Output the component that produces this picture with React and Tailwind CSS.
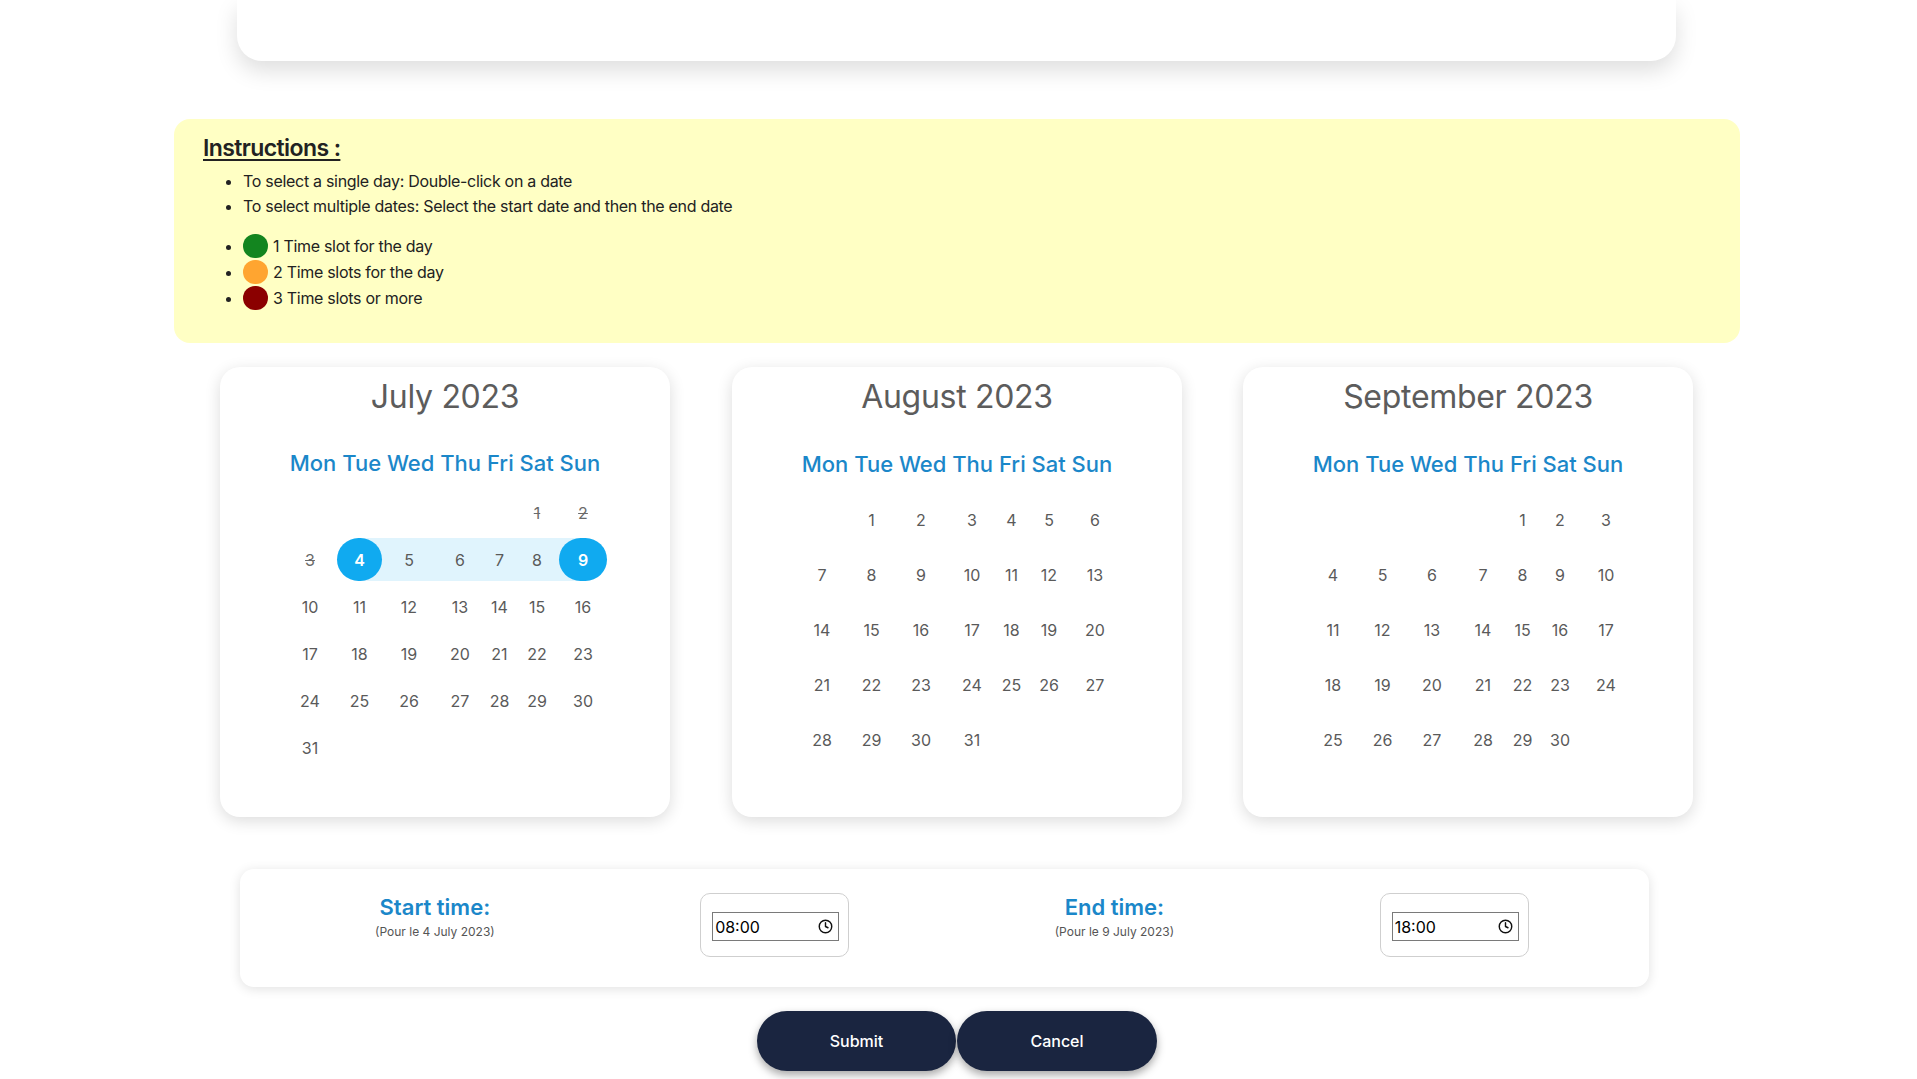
import React from "react";
import { Clock } from "lucide-react";

const months = [
  {
    title: "July 2023",
    compact: true,
    rows: [
      [null, null, null, null, null, 1, 2],
      [3, 4, 5, 6, 7, 8, 9],
      [10, 11, 12, 13, 14, 15, 16],
      [17, 18, 19, 20, 21, 22, 23],
      [24, 25, 26, 27, 28, 29, 30],
      [31, null, null, null, null, null, null],
    ],
    past: [1, 2, 3],
    start: 4,
    end: 9,
  },
  {
    title: "August 2023",
    compact: false,
    rows: [
      [null, 1, 2, 3, 4, 5, 6],
      [7, 8, 9, 10, 11, 12, 13],
      [14, 15, 16, 17, 18, 19, 20],
      [21, 22, 23, 24, 25, 26, 27],
      [28, 29, 30, 31, null, null, null],
    ],
    past: [],
  },
  {
    title: "September 2023",
    compact: false,
    rows: [
      [null, null, null, null, 1, 2, 3],
      [4, 5, 6, 7, 8, 9, 10],
      [11, 12, 13, 14, 15, 16, 17],
      [18, 19, 20, 21, 22, 23, 24],
      [25, 26, 27, 28, 29, 30, null],
    ],
    past: [],
  },
];

function DayCell({ d, m }) {
  if (d === null) return <div />;
  const isStart = m.start === d;
  const isEnd = m.end === d;
  const isMid = m.start && d > m.start && d < m.end;
  if (isStart || isEnd) {
    return (
      <div className="relative flex h-full items-center">
        <div
          className={
            isStart
              ? "absolute left-1/2 right-0 h-[43px] bg-[#e0f4fd]"
              : "absolute left-0 right-1/2 h-[43px] bg-[#e0f4fd]"
          }
        />
        <div className="relative flex h-[43px] w-full items-center justify-center rounded-full bg-[#10aaf0] text-[16px] font-semibold text-white">
          {d}
        </div>
      </div>
    );
  }
  if (isMid) {
    return (
      <div className="flex h-full items-center">
        <div className="flex h-[43px] w-full items-center justify-center bg-[#e0f4fd] text-[16px] text-[#5a5a5a]">
          {d}
        </div>
      </div>
    );
  }
  const past = m.past.includes(d);
  return (
    <div
      className={
        past
          ? "flex h-full items-center justify-center text-[16px] text-[#6a6a6a] line-through"
          : "flex h-full items-center justify-center text-[16px] text-[#5a5a5a]"
      }
    >
      {d}
    </div>
  );
}

function MonthCard({ m }) {
  return (
    <div className="h-[450px] w-[450px] shrink-0 rounded-[20px] bg-white pt-[11px] shadow-[0_4px_16px_rgba(0,0,0,0.14)]">
      <h2 className="h-[38px] text-center text-[32px] font-normal leading-[38px] tracking-[-0.3px] text-[#5c5c5c]">
        {m.title}
      </h2>
      <div
        className={
          m.compact
            ? "mt-[22px] h-[51px] text-center text-[22px] font-medium leading-[51px] text-[#1b87c9]"
            : "mt-[20px] h-[56px] text-center text-[22px] font-medium leading-[56px] text-[#1b87c9]"
        }
      >
        Mon Tue Wed Thu Fri Sat Sun
      </div>
      <div className="mx-auto w-[324px]">
        {m.rows.map((row, i) => (
          <div
            key={i}
            className={
              m.compact
                ? "grid h-[47px] grid-cols-[54px_45px_54px_48px_31px_44px_48px]"
                : "grid h-[55px] grid-cols-[54px_45px_54px_48px_31px_44px_48px]"
            }
          >
            {row.map((d, j) => (
              <DayCell key={j} d={d} m={m} />
            ))}
          </div>
        ))}
      </div>
    </div>
  );
}

function TimeLabel({ title, sub }) {
  return (
    <div className="flex flex-col items-center pt-[25px]">
      <div className="text-[22px] font-semibold leading-[26px] text-[#1b87c9]">{title}</div>
      <div className="mt-[4px] text-[12px] leading-[16px] text-[#555]">{sub}</div>
    </div>
  );
}

function TimeBox({ value }) {
  return (
    <div className="flex justify-center pt-[24px]">
      <div className="h-[64px] w-[149px] rounded-[10px] border border-[#cfcfcf] bg-white px-[11px] py-[18px]">
        <div className="flex h-[29px] w-[127px] items-center justify-between border border-[#7a7a7a] pl-[2px] pr-[5px] text-[16px] text-black">
          <span>{value}</span>
          <Clock size={15} strokeWidth={2.3} color="#111" />
        </div>
      </div>
    </div>
  );
}

function Legend({ color, children }) {
  return (
    <li>
      <span className="inline-flex h-[26px] items-center align-top">
        <span className={`mr-[5px] inline-block h-[24px] w-[25px] rounded-full ${color}`} />
        <span>{children}</span>
      </span>
    </li>
  );
}

export default function App() {
  return (
    <div className="min-h-screen w-full bg-white pb-[40px] font-['Inter',sans-serif]">
      <div className="ml-[237px] h-[61px] w-[1439px] rounded-b-[25px] bg-white shadow-[0_10px_22px_rgba(0,0,0,0.13)]" />

      <div className="ml-[174px] mt-[58px] h-[224px] w-[1566px] rounded-[16px] bg-[#ffffc4] pl-[29px] pt-[13px] text-[#222]">
        <h3 className="text-[23px] font-semibold leading-[32px] tracking-[-0.6px] underline decoration-2 underline-offset-[3px]">
          Instructions :
        </h3>
        <ul className="mt-[5px] list-disc pl-10 text-[16px] leading-[25px] tracking-[-0.3px]">
          <li>To select a single day: Double-click on a date</li>
          <li>To select multiple dates: Select the start date and then the end date</li>
        </ul>
        <ul className="mt-[14px] list-disc pl-10 text-[16px] leading-[26px] tracking-[-0.3px]">
          <Legend color="bg-[#13851f]">1 Time slot for the day</Legend>
          <Legend color="bg-[#ffa530]">2 Time slots for the day</Legend>
          <Legend color="bg-[#8b0000]">3 Time slots or more</Legend>
        </ul>
      </div>

      <div className="ml-[220px] mt-[24px] flex gap-[62px]">
        <MonthCard m={months[0]} />
        <MonthCard m={months[1]} />
        <div className="-ml-px">
          <MonthCard m={months[2]} />
        </div>
      </div>

      <div className="ml-[240px] mt-[52px] grid h-[118px] w-[1409px] grid-cols-4 rounded-[14px] bg-white px-[25px] shadow-[0_2px_12px_rgba(0,0,0,0.12)]">
        <TimeLabel title="Start time:" sub="(Pour le 4 July 2023)" />
        <TimeBox value="08:00" />
        <TimeLabel title="End time:" sub="(Pour le 9 July 2023)" />
        <TimeBox value="18:00" />
      </div>

      <div className="ml-[757px] mt-[24px] flex gap-px">
        <button className="h-[60px] w-[199px] rounded-full bg-[#1a2540] text-[16px] font-medium text-white shadow-[0_4px_8px_rgba(0,0,0,0.35)]">
          Submit
        </button>
        <button className="h-[60px] w-[200px] rounded-full bg-[#1a2540] text-[16px] font-medium text-white shadow-[0_4px_8px_rgba(0,0,0,0.35)]">
          Cancel
        </button>
      </div>
    </div>
  );
}
